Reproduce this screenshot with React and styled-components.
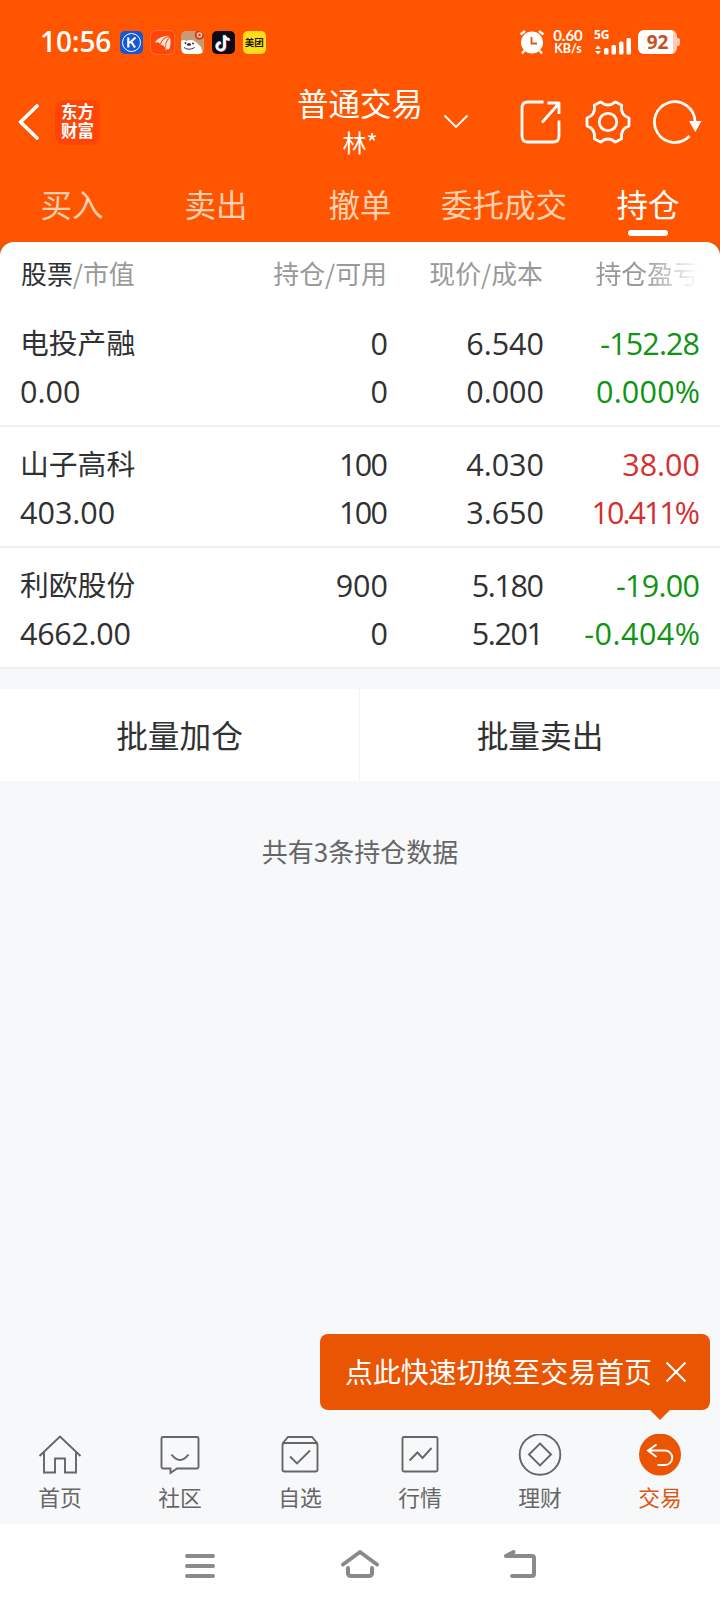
import React from "react";
import styled, { createGlobalStyle, css } from "styled-components";

const holdings = [
  {
    name: "电投产融",
    value: "0.00",
    held: "0",
    usable: "0",
    price: "6.540",
    cost: "0.000",
    profit: "-152.28",
    percent: "0.000%",
    color: "#0f9413",
    tight: { profit: -0.9, percent: 0.2 },
  },
  {
    name: "山子高科",
    value: "403.00",
    held: "100",
    usable: "100",
    price: "4.030",
    cost: "3.650",
    profit: "38.00",
    percent: "10.411%",
    color: "#d33030",
    tight: { held: -1.6, usable: -1.6, percent: -2 },
  },
  {
    name: "利欧股份",
    value: "4662.00",
    held: "900",
    usable: "0",
    price: "5.180",
    cost: "5.201",
    profit: "-19.00",
    percent: "-0.404%",
    color: "#0f9413",
    tight: { value: -0.3, price: -1.4, cost: -1.4, profit: -0.7, percent: 0.5 },
  },
];

const tabs = ["买入", "卖出", "撤单", "委托成交", "持仓"];

const HomeIcon = () => (
  <svg width="44" height="44" viewBox="0 0 44 44">
    <path d="M1.500 22 22 2.500 42.500 22M6 18.500V38.500H17V24.500H27V38.500H38V18.500" />
  </svg>
);

const CommunityIcon = () => (
  <svg width="44" height="44" viewBox="0 0 44 44">
    <path d="M5 3H39a1.500 1.500 0 0 1 1.500 1.500V33a1.500 1.500 0 0 1-1.500 1.500H19L12.500 39V34.500H5A1.500 1.500 0 0 1 3.500 33V4.500A1.500 1.500 0 0 1 5 3Z" />
    <path d="M13.500 20.500q8.500 11 17 0" />
  </svg>
);

const WatchlistIcon = () => (
  <svg width="44" height="44" viewBox="0 0 44 44">
    <rect x="4.500" y="9" width="35" height="28.500" rx="2" />
    <path d="M4.500 9.500 10 3H34L39.500 9.500M12 22.500 19 29.500 32 16.500" />
  </svg>
);

const MarketIcon = () => (
  <svg width="44" height="44" viewBox="0 0 44 44">
    <rect x="4.500" y="3" width="35" height="34.500" rx="1.500" />
    <path d="M11.500 26.500 19.500 18.500 24.500 24 33.500 14" />
  </svg>
);

const WealthIcon = () => (
  <svg width="44" height="44" viewBox="0 0 44 44">
    <circle cx="22" cy="20.500" r="20.300" />
    <path d="M22 9.500 33 20.500 22 31.500 11 20.500Z" />
  </svg>
);

const TradeIcon = () => (
  <svg width="44" height="44" viewBox="0 0 44 44">
    <circle cx="22" cy="20.500" r="21" fill="#ea5504" stroke="none" />
    <path stroke="#fff" d="M18.500 10.500 10 16.500 18.500 23M10 16.500H27a7 7 0 0 1 0 14.500H19.500" />
  </svg>
);

const bottomItems = [
  { label: "首页", Icon: HomeIcon },
  { label: "社区", Icon: CommunityIcon },
  { label: "自选", Icon: WatchlistIcon },
  { label: "行情", Icon: MarketIcon },
  { label: "理财", Icon: WealthIcon },
  { label: "交易", Icon: TradeIcon, active: true },
];

function StatusIcons() {
  return (
    <AppIcons>
      <AppIcon $bg="#1458d8">
        <svg width="23" height="23" viewBox="0 0 23 23" fill="none" stroke="#fff">
          <circle cx="11.500" cy="11.500" r="9" strokeWidth="1" />
          <path d="M8.300 6.500V16.500M15.500 6.500 9.500 12M11 10.500 15 16.500" strokeWidth="2.200" />
        </svg>
      </AppIcon>
      <AppIcon $bg="#ff4606" $edge>
        <svg width="23" height="23" viewBox="0 0 23 23" fill="#ffeade">
          <path d="M4 11.500Q8 5 18 4.500 11 7 9 12.500 7 10.500 4 11.500Z" />
          <path d="M9.500 14Q11 8 18.500 5.500 14 10 14 16.500 12 13 9.500 14Z" />
          <path d="M14.500 19.500Q14.500 11 19 6.500 20.500 14 18 18.500 16.500 17.500 14.500 19.500Z" />
        </svg>
      </AppIcon>
      <AppIcon $bg="#c99a76">
        <svg width="23" height="23" viewBox="0 0 23 23">
          <path d="M0 10Q3 8 5 10 12 7 16 12L20 16 22 23H2Q0 19 0 14Z" fill="#fff" />
          <circle cx="18.500" cy="4" r="3.800" fill="#f5c9a0" stroke="#d8371c" strokeWidth="2" />
          <circle cx="18.500" cy="4" r="1.200" fill="#d8371c" />
          <circle cx="4.500" cy="12" r="0.900" fill="#222" />
          <circle cx="12" cy="12.500" r="0.900" fill="#222" />
          <ellipse cx="8" cy="13.500" rx="2" ry="1.300" fill="#222" />
          <path d="M3 16.500Q8 20 13.500 16.500" fill="none" stroke="#333" strokeWidth="1" />
        </svg>
      </AppIcon>
      <AppIcon $bg="#0d0b16">
        <svg width="23" height="23" viewBox="0 0 23 23" fill="none" strokeWidth="2.600">
          <path d="M12 4V15a3.800 3.800 0 1 1-3.800-3.800M12 4Q13 8 17 8" stroke="#28e5e2" />
          <path d="M13.300 5V16a3.800 3.800 0 1 1-3.800-3.800M13.300 5Q14.300 9 18.300 9" stroke="#f5325b" />
          <path d="M12.600 4.500V15.500a3.800 3.800 0 1 1-3.800-3.800M12.600 4.500Q13.600 8.500 17.600 8.500" stroke="#fff" />
        </svg>
      </AppIcon>
      <AppIcon $bg="#ffdd1c">美团</AppIcon>
    </AppIcons>
  );
}

function StatusBar() {
  return (
    <StatusRow>
      <Clock>10:56</Clock>
      <StatusIcons />
      <StatusRight>
        <svg width="26" height="26" viewBox="0 0 26 26" fill="none" stroke="#fff">
          <circle cx="13" cy="13.500" r="11" fill="#fff" stroke="none" />
          <path d="M1.500 5.500 6 2M24.500 5.500 20 2M5.500 21.500 3 24.500M20.500 21.500 23 24.500" strokeWidth="2.400" />
          <path d="M12.500 8V14.500H18" stroke="#d95716" strokeWidth="1.800" />
        </svg>
        <NetSpeed>
          <span>0.60</span>
          <small>KB/s</small>
        </NetSpeed>
        <Signal>
          <span>5G</span>
          <svg width="38" height="26" viewBox="0 0 38 26" fill="#fff">
            <path d="M1 20 4 16.500 7 20ZM1 22 4 25.500 7 22Z" />
            <rect x="10" y="19" width="4.500" height="6.500" rx="1.500" />
            <rect x="17.500" y="16" width="4.500" height="9.500" rx="1.500" />
            <rect x="25" y="12.500" width="4.500" height="13" rx="1.500" />
            <rect x="32.500" y="9" width="4.500" height="16.500" rx="1.500" />
          </svg>
        </Signal>
        <Battery>92</Battery>
      </StatusRight>
    </StatusRow>
  );
}

function TitleBar() {
  return (
    <TitleRow>
      <TitleSide>
        <svg width="22" height="38" viewBox="0 0 22 38" fill="none" stroke="#fff" strokeWidth="3.600" strokeLinecap="round" strokeLinejoin="round">
          <path d="M19 3 2.500 19 19 35" />
        </svg>
        <BrandLogo>东方财富</BrandLogo>
      </TitleSide>
      <Account>
        <h1>普通交易</h1>
        <p>林*</p>
      </Account>
      <TitleSide $end>
        <svg width="26" height="16" viewBox="0 0 26 16" fill="none" stroke="#fff" strokeWidth="1.800">
          <path d="M1.500 1.500 13 13 24.500 1.500" />
        </svg>
        <TitleActions>
          <svg width="44" height="46" viewBox="0 0 44 46">
            <path d="M24.500 3H9Q3 3 3 9V37Q3 43 9 43H34Q40 43 40 37V21.500" />
            <path d="M23 23.500 39.500 5M28.500 4H40V15" />
          </svg>
          <svg width="46" height="46" viewBox="0 0 46 46">
            <path d="M15.500 2.900Q23 9 30.500 2.900L36.600 6.300Q35 16 44 19V27Q35 30 36.600 39.700L30.500 43.100Q23 37 15.500 43.100L9.400 39.700Q11 30 2 27V19Q11 16 9.400 6.300Z" />
            <circle cx="23" cy="23" r="8.700" />
          </svg>
          <svg width="50" height="46" viewBox="0 0 50 46">
            <path d="M37.500 37A20.300 20.300 0 1 1 43 22" />
            <path d="M37 22H49.500L43.300 33Z" fill="#fff" stroke="none" />
          </svg>
        </TitleActions>
      </TitleSide>
    </TitleRow>
  );
}

function HoldingRow({ item }) {
  const { tight } = item;
  return (
    <Row>
      <Cell $left>
        <b>{item.name}</b>
        <Num $ls={tight.value}>{item.value}</Num>
      </Cell>
      <Cell>
        <Num $ls={tight.held}>{item.held}</Num>
        <Num $ls={tight.usable}>{item.usable}</Num>
      </Cell>
      <Cell>
        <Num $ls={tight.price}>{item.price}</Num>
        <Num $ls={tight.cost}>{item.cost}</Num>
      </Cell>
      <Cell $color={item.color}>
        <Num $ls={tight.profit}>{item.profit}</Num>
        <Num $ls={tight.percent}>{item.percent}</Num>
      </Cell>
    </Row>
  );
}

function App() {
  return (
    <Screen>
      <GlobalStyle />
      <Header>
        <StatusBar />
        <TitleBar />
        <Tabs>
          {tabs.map((tab) => (
            <Tab key={tab} $active={tab === "持仓"}>
              {tab}
            </Tab>
          ))}
        </Tabs>
      </Header>
      <Sheet>
        <TableHead>
          <span>
            <em>股票</em>/市值
          </span>
          <span>持仓/可用</span>
          <span>现价/成本</span>
          <FadeLabel>持仓盈亏</FadeLabel>
        </TableHead>
        {holdings.map((item) => (
          <HoldingRow key={item.name} item={item} />
        ))}
      </Sheet>
      <BatchActions>
        <BatchButton>批量加仓</BatchButton>
        <BatchButton>批量卖出</BatchButton>
      </BatchActions>
      <Summary>共有3条持仓数据</Summary>
      <BottomBar>
        {bottomItems.map(({ label, Icon, active }) => (
          <BottomItem key={label} $active={active}>
            <Icon />
            <span>{label}</span>
          </BottomItem>
        ))}
        <Tip>
          <span>点此快速切换至交易首页</span>
          <svg width="22" height="22" viewBox="0 0 22 22" stroke="#fff" strokeWidth="2">
            <path d="M1.500 1.500 20.500 20.500M20.500 1.500 1.500 20.500" />
          </svg>
        </Tip>
      </BottomBar>
      <SystemNav>
        <svg width="40" height="36" viewBox="0 0 40 36">
          <path d="M7 8H33M7 18H33M7 28H33" />
        </svg>
        <svg width="40" height="36" viewBox="0 0 40 36">
          <path d="M3 16.500 20 4 37 16.500M8 20V25Q8 28 11 28H29Q32 28 32 25V20" />
        </svg>
        <svg width="40" height="36" viewBox="0 0 40 36">
          <path d="M13.500 4 6 8H32Q34 8 34 10V26Q34 28 32 28H12" />
        </svg>
      </SystemNav>
    </Screen>
  );
}

const GlobalStyle = createGlobalStyle`
  * {
    box-sizing: border-box;
    margin: 0;
    padding: 0;
  }

  body {
    font-family: "Open Sans", "Noto Sans CJK SC", sans-serif;
    color: #303133;
  }

  svg {
    display: block;
    flex-shrink: 0;
  }
`;

const Screen = styled.div`
  display: flex;
  flex-direction: column;
  width: 720px;
  height: 1608px;
  overflow: hidden;
  background: #f7f8fa;
  font-family: "Noto Sans CJK SC", sans-serif;
`;

const Header = styled.header`
  height: 242px;
  flex-shrink: 0;
  background: #ff5500;
  color: #fff;
`;

const StatusRow = styled.div`
  display: flex;
  align-items: center;
  height: 84px;
  padding: 0 43px 0 40px;
  font-family: "Open Sans", sans-serif;
`;

const Clock = styled.div`
  width: 80px;
  padding-bottom: 2px;
  font-size: 28px;
  font-weight: 600;
  letter-spacing: -0.1px;
`;

const AppIcons = styled.div`
  display: flex;
  gap: 7.7px;
`;

const AppIcon = styled.div`
  display: flex;
  align-items: center;
  justify-content: center;
  width: 23px;
  height: 23px;
  border-radius: 5px;
  overflow: hidden;
  background: ${({ $bg }) => $bg};
  box-shadow: ${({ $edge }) => ($edge ? "0 0 0 1px #ff6a3c" : "none")};
  color: #201a00;
  font: 700 9.5px "Noto Sans CJK SC", sans-serif;
  white-space: nowrap;
`;

const StatusRight = styled.div`
  display: flex;
  align-items: center;
  margin-left: auto;
`;

const NetSpeed = styled.div`
  display: flex;
  flex-direction: column;
  align-items: center;
  width: 32px;
  margin: 0 10px 0 7px;
  font-family: Lato, sans-serif;
  font-size: 15px;
  font-weight: 700;
  line-height: 14px;

  small {
    font-size: 12.5px;
  }
`;

const Signal = styled.div`
  display: grid;
  width: 38px;
  height: 26px;
  margin-right: 6px;

  span,
  svg {
    grid-area: 1 / 1;
  }

  span {
    font-size: 12px;
    font-weight: 700;
    line-height: 12px;
  }
`;

const Battery = styled.div`
  position: relative;
  width: 39px;
  height: 24px;
  border-radius: 6px;
  background: linear-gradient(90deg, #fff 90%, #ffc9b3 90%);
  color: #c4521f;
  font-size: 19px;
  font-weight: 700;
  line-height: 24px;
  text-align: center;

  &::after {
    content: "";
    position: absolute;
    left: 39px;
    top: 8px;
    width: 3px;
    height: 8px;
    border-radius: 0 2px 2px 0;
    background: #ffc9b3;
  }
`;

const TitleRow = styled.div`
  display: grid;
  grid-template-columns: 1fr 140px 1fr;
  height: 74px;
  padding: 0 18px;
`;

const TitleSide = styled.div`
  display: flex;
  align-items: center;
  justify-content: ${({ $end }) => ($end ? "space-between" : "flex-start")};
  gap: 15px;
  padding-left: ${({ $end }) => ($end ? "13px" : "0")};
`;

const BrandLogo = styled.div`
  width: 45px;
  height: 45px;
  padding: 2px 6px 0;
  border-radius: 9px;
  background: #ff4408;
  font: 700 16.5px/19.5px "Noto Sans CJK SC", sans-serif;
`;

const Account = styled.div`
  display: flex;
  flex-direction: column;
  align-items: center;

  h1 {
    font-size: 31.5px;
    font-weight: 400;
    line-height: 37px;
  }

  p {
    margin-top: 3px;
    font-size: 24px;
    line-height: 36px;
  }
`;

const TitleActions = styled.div`
  display: flex;
  gap: 21.5px;

  svg {
    fill: none;
    stroke: #fff;
    stroke-width: 2.8;
    stroke-linejoin: round;
  }
`;

const Tabs = styled.nav`
  display: grid;
  grid-template-columns: repeat(5, 1fr);
  height: 84px;
`;

const Tab = styled.div`
  display: flex;
  flex-direction: column;
  align-items: center;
  padding-top: 22px;
  font-size: 31.5px;
  line-height: 46px;
  color: ${({ $active }) => ($active ? "#fff" : "#ffd0b0")};

  ${({ $active }) =>
    $active &&
    css`
      &::after {
        content: "";
        width: 40px;
        height: 6px;
        margin-top: 4px;
        border-radius: 3px;
        background: #fff;
      }
    `}
`;

const Sheet = styled.main`
  flex-shrink: 0;
  background: radial-gradient(circle at 14px 14px, #fff 13.5px, #ea560a 14.5px) 0 0 / 14px 14px no-repeat,
    radial-gradient(circle at 0 14px, #fff 13.5px, #ea560a 14.5px) 100% 0 / 14px 14px no-repeat, #fff;
`;

const columns = css`
  display: grid;
  grid-template-columns: 214px 152px 156px 156px;
  padding: 0 21px;
`;

const TableHead = styled.div`
  ${columns}
  height: 64px;
  padding-top: 12px;
  font-size: 25.9px;
  line-height: 38px;
  color: #999;
  text-align: right;

  span:first-child {
    text-align: left;
  }

  em {
    font-style: normal;
    color: #303133;
  }
`;

const FadeLabel = styled.span`
  mask-image: linear-gradient(90deg, #000 65%, transparent);
`;

const Row = styled.div`
  ${columns}
  height: 121px;
  padding-top: 13px;
  border-bottom: 2px solid #efeff0;
`;

const Cell = styled.div`
  display: flex;
  flex-direction: column;
  align-items: ${({ $left }) => ($left ? "flex-start" : "flex-end")};
  margin-left: ${({ $left }) => ($left ? "-1px" : "0")};
  color: ${({ $color }) => $color || "#303133"};

  b {
    margin-bottom: 2px;
    font-size: 28.8px;
    font-weight: 400;
    line-height: 46px;
  }
`;

/* the trailing letter-spacing is taken back so the columns end on one line */
const Num = styled.span`
  margin-right: ${({ $ls }) => -1 - ($ls || 0)}px;
  font-family: "Open Sans", sans-serif;
  font-size: 30.5px;
  line-height: 48px;
  letter-spacing: ${({ $ls }) => $ls || 0}px;
`;

const BatchActions = styled.div`
  display: grid;
  grid-template-columns: 1fr 1fr;
  flex-shrink: 0;
  height: 92px;
  margin-top: 20px;
  background: #fff;
`;

const BatchButton = styled.div`
  font-size: 31.7px;
  line-height: 90px;
  text-align: center;

  &:first-child {
    border-right: 1px solid #f3f3f5;
  }
`;

const Summary = styled.p`
  margin-top: 51px;
  font-size: 26px;
  line-height: 38px;
  text-align: center;
  color: #666;
`;

const BottomBar = styled.nav`
  position: relative;
  display: grid;
  grid-template-columns: repeat(6, 1fr);
  height: 90px;
  margin-top: auto;
`;

const BottomItem = styled.div`
  display: flex;
  flex-direction: column;
  align-items: center;
  font-size: 21.8px;
  line-height: 38px;
  color: ${({ $active }) => ($active ? "#dd5510" : "#666")};

  svg {
    fill: none;
    stroke: #666;
    stroke-width: 1.9;
  }
`;

const Tip = styled.div`
  position: absolute;
  right: 10px;
  bottom: 114px;
  display: flex;
  align-items: center;
  gap: 13px;
  width: 390px;
  height: 76px;
  padding-left: 25px;
  border-radius: 8px;
  background: #ea5504;
  color: #fff;
  font-size: 27.9px;

  span {
    padding-bottom: 2px;
  }

  &::after {
    content: "";
    position: absolute;
    right: 40px;
    top: 76px;
    border: 10px solid transparent;
    border-top-color: #ea5504;
    border-bottom: 0;
  }
`;

const SystemNav = styled.footer`
  display: flex;
  justify-content: center;
  gap: 120px;
  flex-shrink: 0;
  height: 84px;
  padding-top: 24px;
  background: #fff;

  svg {
    fill: none;
    stroke: #8a8a8a;
    stroke-width: 4;
    stroke-linecap: round;
    stroke-linejoin: round;
  }
`;

export default App;
